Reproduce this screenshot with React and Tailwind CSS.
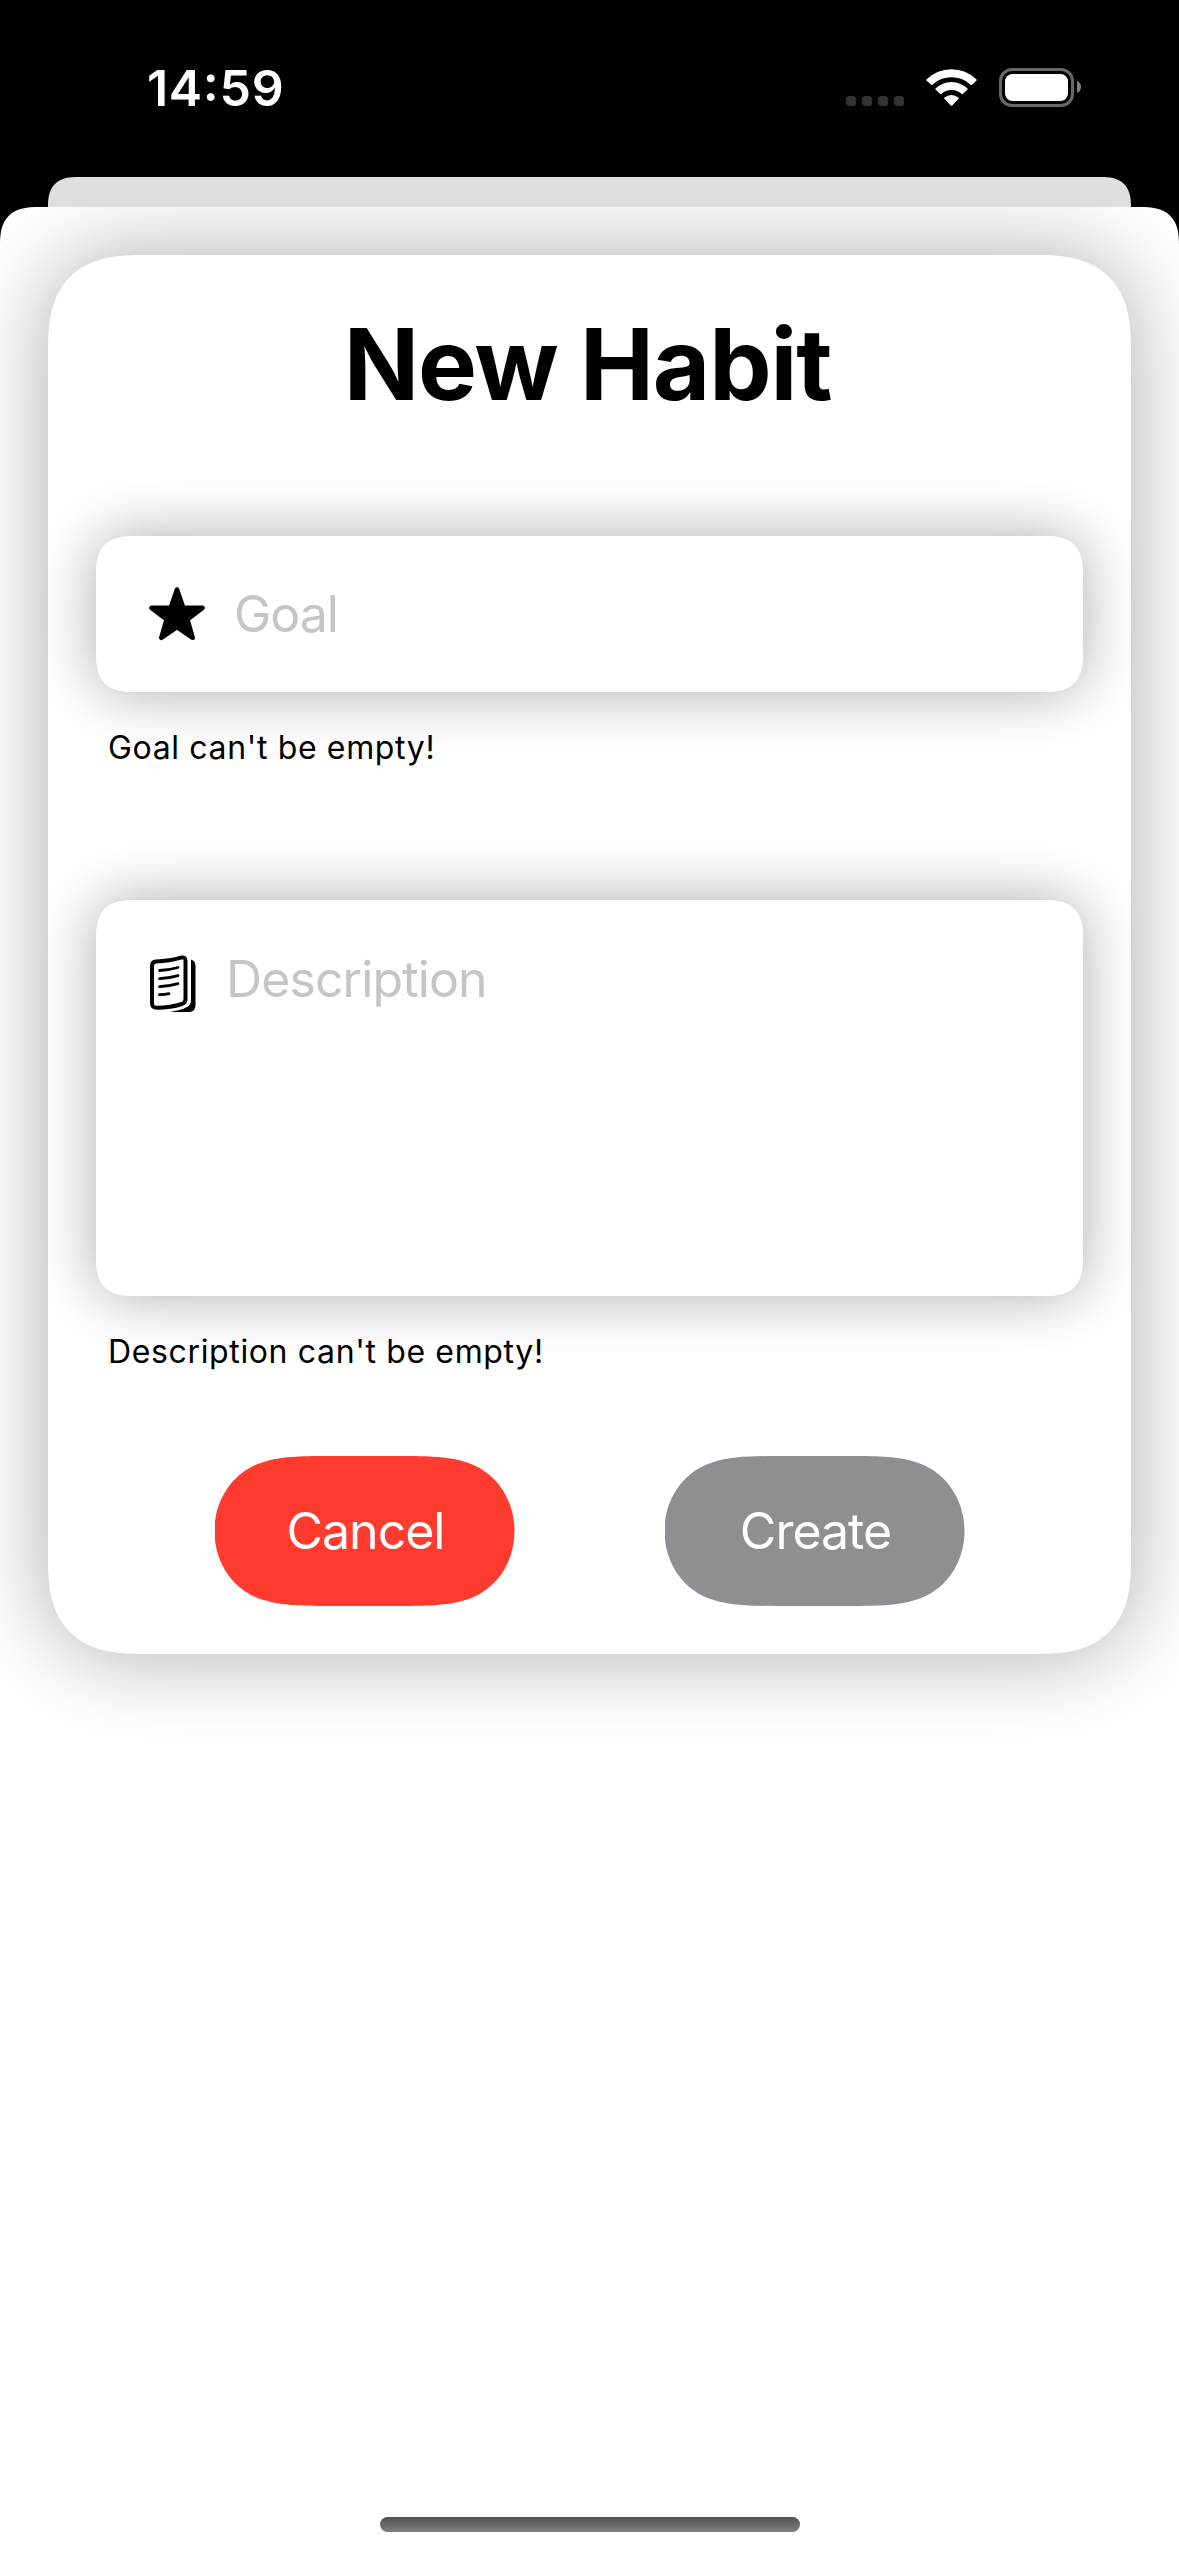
function StatusBar() {
  return (
    <header className="flex h-[177px] shrink-0 items-start justify-between pt-[58px] pr-[98px] pl-[147px]">
      <time className="text-[50px] leading-[60px] font-semibold tracking-[0.7px] text-white">
        14<span className="relative -top-[5px]">:</span>59
      </time>
      <svg className="mt-[7px] h-[46px] w-[235px]" viewBox="846 65 235 46" fill="none">
        <g fill="#343434">
          <rect x="846" y="96" width="10" height="10" rx="3.5" />
          <rect x="862" y="96" width="10" height="10" rx="3.5" />
          <rect x="878" y="96" width="10" height="10" rx="3.5" />
          <rect x="894" y="96" width="10" height="10" rx="3.5" />
        </g>
        <g fill="#fff">
          <path d="M926.6 90.2Q926 89.5 926.7 88.8A35.5 35.5 0 0 1 976.3 88.8Q977 89.5 976.4 90.2L971.8 94.3Q971.2 94.8 970.6 94.2A28 28 0 0 0 932.4 94.2Q931.8 94.8 931.2 94.3Z" transform="translate(0 -9.5)" />
          <path d="M935.5 99Q935 98.5 935.6 97.9A23 23 0 0 1 967.4 97.9Q968 98.5 967.5 99L963 103.3Q962.4 103.9 961.8 103.4A15.5 15.5 0 0 0 941.2 103.4Q940.6 103.9 940 103.3Z" transform="translate(0 -9.5)" />
          <path d="M944.4 98.7Q943.8 98.1 944.5 97.5A11 11 0 0 1 958.5 97.5Q959.2 98.1 958.6 98.7L952.2 105.4Q951.5 106 950.8 105.4Z" />
        </g>
        <rect x="1000.5" y="69.5" width="72" height="36" rx="11.5" stroke="#686868" strokeWidth="3" />
        <rect x="1005" y="74" width="63" height="27" rx="7.5" fill="#fff" />
        <path d="M1077 81Q1081 82.5 1081 87Q1081 91.500 1077 93Z" fill="#808080" />
      </svg>
    </header>
  );
}

function StarIcon() {
  return (
    <svg className="h-[54px] w-[56px]" viewBox="0 0 56 54">
      <path
        d="M28 2.500L34.200 20.500L53.500 20.900L38.400 32.500L43.700 50.800L28 40L12.300 50.800L17.600 32.500L2.500 20.900L21.800 20.500Z"
        fill="#000"
        stroke="#000"
        strokeWidth="4.600"
        strokeLinejoin="round"
      />
    </svg>
  );
}

function DocumentIcon() {
  return (
    <svg className="mt-[6px] h-[58px] w-[46px]" viewBox="0 0 46 58" fill="none" stroke="#000" strokeLinecap="round">
      <path
        d="M6 6.500C15 6.200 24 4.800 31 2.700C34 1.800 35.500 3 35.500 5.500V44C35.500 46.500 34.500 48 32 49C24 51.600 15 52.700 7 52.700C3.500 52.700 2 51.500 2 48V11C2 8 3 6.600 6 6.500Z"
        strokeWidth="4"
        strokeLinejoin="round"
      />
      <path d="M9.500 15.500Q19 15.200 28 12.500M9.500 23.700Q19 23.400 28 20.700M9.500 31.700Q19 31.400 28 28.700M9.500 39.700Q15 39.600 19 38.700" strokeWidth="2.800" />
      <path d="M41 4.600C44 5.500 45.500 7.600 45.500 11V50C45.500 54.500 43 57 39 57H20C27 56 32 54.600 36 52.600C39.500 50.800 41 48.500 41 45Z" fill="#000" stroke="none" />
    </svg>
  );
}

function PillButton({ color, children }) {
  return (
    <button
      className={`h-[150px] w-[300px] pl-[2px] [clip-path:path('M0_75C0_42_20_14_50_5.7C66_0.8_84_0_115_0H185C216_0_234_0.8_250_5.7C280_14_300_42_300_75C300_108_280_136_250_144.3C234_149.2_216_150_185_150H115C84_150_66_149.2_50_144.3C20_136_0_108_0_75Z')] ${color}`}
    >
      {children}
    </button>
  );
}

export default function App() {
  return (
    <div className="flex h-[2556px] w-[1179px] flex-col overflow-hidden bg-black font-['Inter',sans-serif] text-black">
      <StatusBar />
      <div className="mx-[48px] h-[30px] shrink-0 rounded-t-[38px] bg-[#dfdfdf] [corner-shape:superellipse(1.4)]" />
      <main className="flex flex-1 flex-col justify-between overflow-hidden rounded-t-[38px] bg-white px-[48px] pt-[48px] pb-[24px] [corner-shape:superellipse(1.4)]">
        <section className="flex flex-col rounded-[95px] bg-white px-[48px] pt-[49px] pb-[48px] shadow-[0_0_90px_rgba(0,0,0,0.33)] [corner-shape:superellipse(1.4)]">
          <h1 className="pr-[4px] text-center text-[99px] leading-[120px] font-bold tracking-[-1.1px]">New Habit</h1>

          <label className="mt-[112px] flex h-[156px] items-center gap-[29px] rounded-[38px] bg-white pl-[53px] shadow-[0_0_60px_rgba(0,0,0,0.33)] [corner-shape:superellipse(1.4)]">
            <StarIcon />
            <span className="text-[50px] leading-[60px] tracking-[-1px] text-[#c5c5c7]">Goal</span>
          </label>
          <p className="z-10 mt-[36px] pl-[12px] text-[32px] leading-[40px] tracking-[0.64px]">Goal can't be empty!</p>

          <label className="mt-[132px] flex h-[396px] items-start gap-[30px] rounded-[38px] bg-white pt-[49px] pl-[54px] shadow-[0_0_60px_rgba(0,0,0,0.33)] [corner-shape:superellipse(1.4)]">
            <DocumentIcon />
            <span className="text-[50px] leading-[60px] tracking-[-0.9px] text-[#c5c5c7]">Description</span>
          </label>
          <p className="z-10 mt-[36px] pl-[12px] text-[32px] leading-[40px] tracking-[0.64px]">Description can't be empty!</p>

          <div className="mt-[84px] flex justify-center gap-[150px] text-[50px] leading-[60px] tracking-[-1px] text-white">
            <PillButton color="bg-[#ff3b30]">Cancel</PillButton>
            <PillButton color="bg-[#8e8e93]">Create</PillButton>
          </div>
        </section>
        <div className="h-[15px] w-[420px] self-center rounded-full bg-linear-to-b from-[#505050] to-[#808080]" />
      </main>
    </div>
  );
}
